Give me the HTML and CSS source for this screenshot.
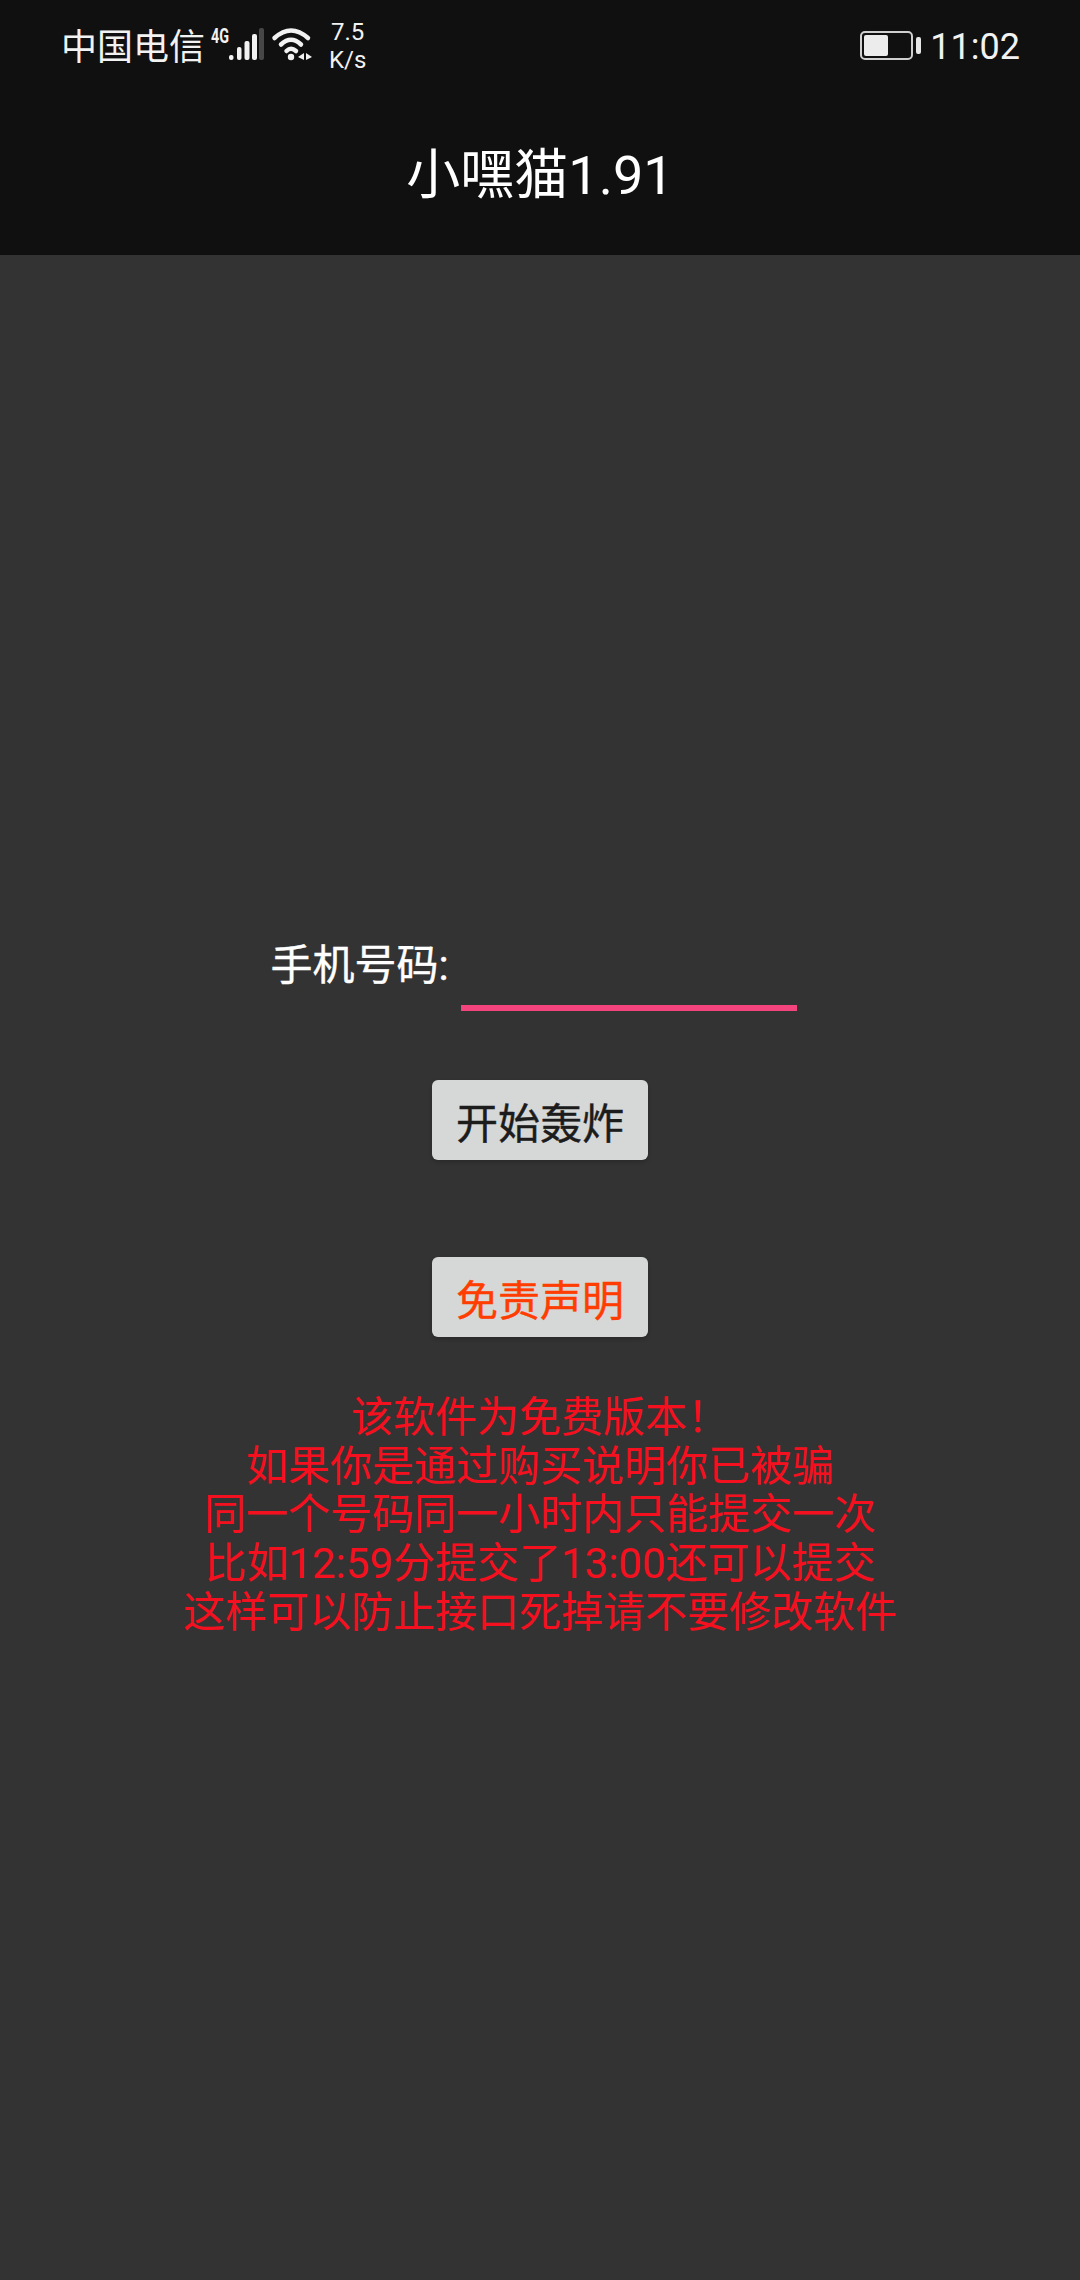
FILE: index.html
```html
<!DOCTYPE html>
<html lang="zh-CN">
  <head>
    <meta charset="UTF-8" />
    <meta name="viewport" content="width=device-width, initial-scale=1.0" />
    <title>小嘿猫1.91</title>
    <link rel="stylesheet" href="styles.css">
  </head>
  <body>
    <header class="app-header">
      <div class="status-bar">
        <div class="status-left">
          <span class="carrier">中国电信</span>
          <svg class="signal-icon" viewBox="0 0 53 32" width="53" height="32">
            <text class="net-type" x="0" y="15" textLength="18" lengthAdjust="spacingAndGlyphs">4G</text>
            <rect x="18" y="27" width="4.500" height="5" rx="2" />
            <rect x="26" y="19" width="4.500" height="13" rx="2" />
            <rect x="33.500" y="13" width="5" height="19" rx="2" />
            <rect x="41" y="6" width="5" height="26" rx="2" />
            <rect class="bar-off" x="48" y="0" width="5" height="32" rx="2" />
          </svg>
          <svg class="wifi-icon" viewBox="0 0 40 32" width="40" height="32">
            <path d="M2.500 10 Q19 -5 36 10" />
            <path d="M9 16.500 Q19 7 29 16.500" />
            <path d="M14.500 23 Q19 18.500 24 23" />
            <circle class="wifi-fill" cx="19" cy="29" r="3.200" />
            <path class="wifi-fill" d="M26 29 L32 25 L32 32 Z M34 25 L40 29 L34 32 Z" />
          </svg>
          <span class="net-speed">7.5<br />K/s</span>
        </div>
        <div class="status-right">
          <span class="battery">
            <span class="battery-level"></span>
          </span>
          <span class="battery-tip"></span>
          <span class="clock">11:02</span>
        </div>
      </div>
      <h1 class="app-title">小嘿猫1.91</h1>
    </header>

    <main class="content">
      <div class="phone-row">
        <label class="phone-label">手机号码:</label>
        <span class="phone-input"></span>
      </div>
      <button class="action-btn">开始轰炸</button>
      <button class="action-btn action-btn-warn">免责声明</button>
      <p class="notice">
        该软件为免费版本&#xFF01;<br />
        如果你是通过购买说明你已被骗<br />
        同一个号码同一小时内只能提交一次<br />
        比如12:59分提交了13:00还可以提交<br />
        这样可以防止接口死掉请不要修改软件
      </p>
    </main>
  </body>
</html>
```

FILE: styles.css
```css
body {
  margin: 0;
  width: 1080px;
  height: 2280px;
  overflow: hidden;
  background-color: #333333;
  font-family: Roboto, "Noto Sans CJK SC", sans-serif;
  color: #ffffff;
}

.app-header {
  height: 255px;
  background-color: #101010;
}

.status-bar {
  display: flex;
  justify-content: space-between;
  align-items: center;
  height: 88px;
  padding: 0 60px 0 61px;
}

.status-left,
.status-right {
  display: flex;
  align-items: center;
}

.status-right {
  padding-top: 3px;
}

.carrier {
  font-size: 36px;
  color: #f2f2f2;
}

.signal-icon {
  margin-left: 6px;
  overflow: visible;
}

.signal-icon rect {
  fill: #f2f2f2;
}

.signal-icon .bar-off {
  fill: #474747;
}

.net-type {
  font-size: 20px;
  font-weight: 700;
  fill: #f2f2f2;
}

.wifi-icon {
  margin-left: 8px;
  overflow: visible;
}

.wifi-icon path {
  fill: none;
  stroke: #f2f2f2;
  stroke-width: 4.500;
  stroke-linecap: round;
}

.wifi-icon .wifi-fill {
  fill: #f2f2f2;
  stroke: none;
}

.net-speed {
  margin: 3px 0 0 17px;
  font-size: 24px;
  line-height: 28px;
  text-align: center;
  color: #f2f2f2;
}

.battery {
  display: flex;
  align-items: center;
  box-sizing: border-box;
  width: 53px;
  height: 29px;
  padding: 2px;
  border: 2px solid #cfcfcf;
  border-radius: 5px;
}

.battery-level {
  width: 24px;
  height: 100%;
  border-radius: 2px;
  background-color: #ececec;
}

.battery-tip {
  width: 5px;
  height: 17px;
  margin-left: 3px;
  border-radius: 2px;
  background-color: #e6e6e6;
}

.clock {
  margin: 2px 0 0 9px;
  font-size: 36px;
  color: #f2f2f2;
}

.app-title {
  margin: 0;
  padding-top: 56px;
  font-size: 54px;
  font-weight: 400;
  line-height: 64px;
  text-align: center;
}

.content {
  display: flex;
  flex-direction: column;
  align-items: center;
  padding-top: 684px;
}

.phone-row {
  display: flex;
  align-items: flex-start;
  gap: 12px;
  margin-left: -13px;
}

.phone-label {
  font-size: 42px;
  line-height: 54px;
  -webkit-text-stroke: 0.4px;
}

.phone-input {
  width: 336px;
  height: 66px;
  border-bottom: 6px solid #f4447e;
}

.action-btn {
  display: block;
  width: 216px;
  height: 80px;
  margin-top: 69px;
  padding: 0;
  border: 0;
  border-radius: 6px;
  background-color: #d6d7d7;
  box-shadow: 0 2px 4px rgba(0, 0, 0, 0.2);
  font-family: inherit;
  font-size: 42px;
  -webkit-text-stroke: 0.4px;
  color: #1c1c1c;
}

.action-btn-warn {
  margin-top: 97px;
  color: #ff3d00;
}

.notice {
  margin: 57px 0 0;
  font-size: 42px;
  line-height: 48.700px;
  text-align: center;
  color: #f5101f;
}
```
